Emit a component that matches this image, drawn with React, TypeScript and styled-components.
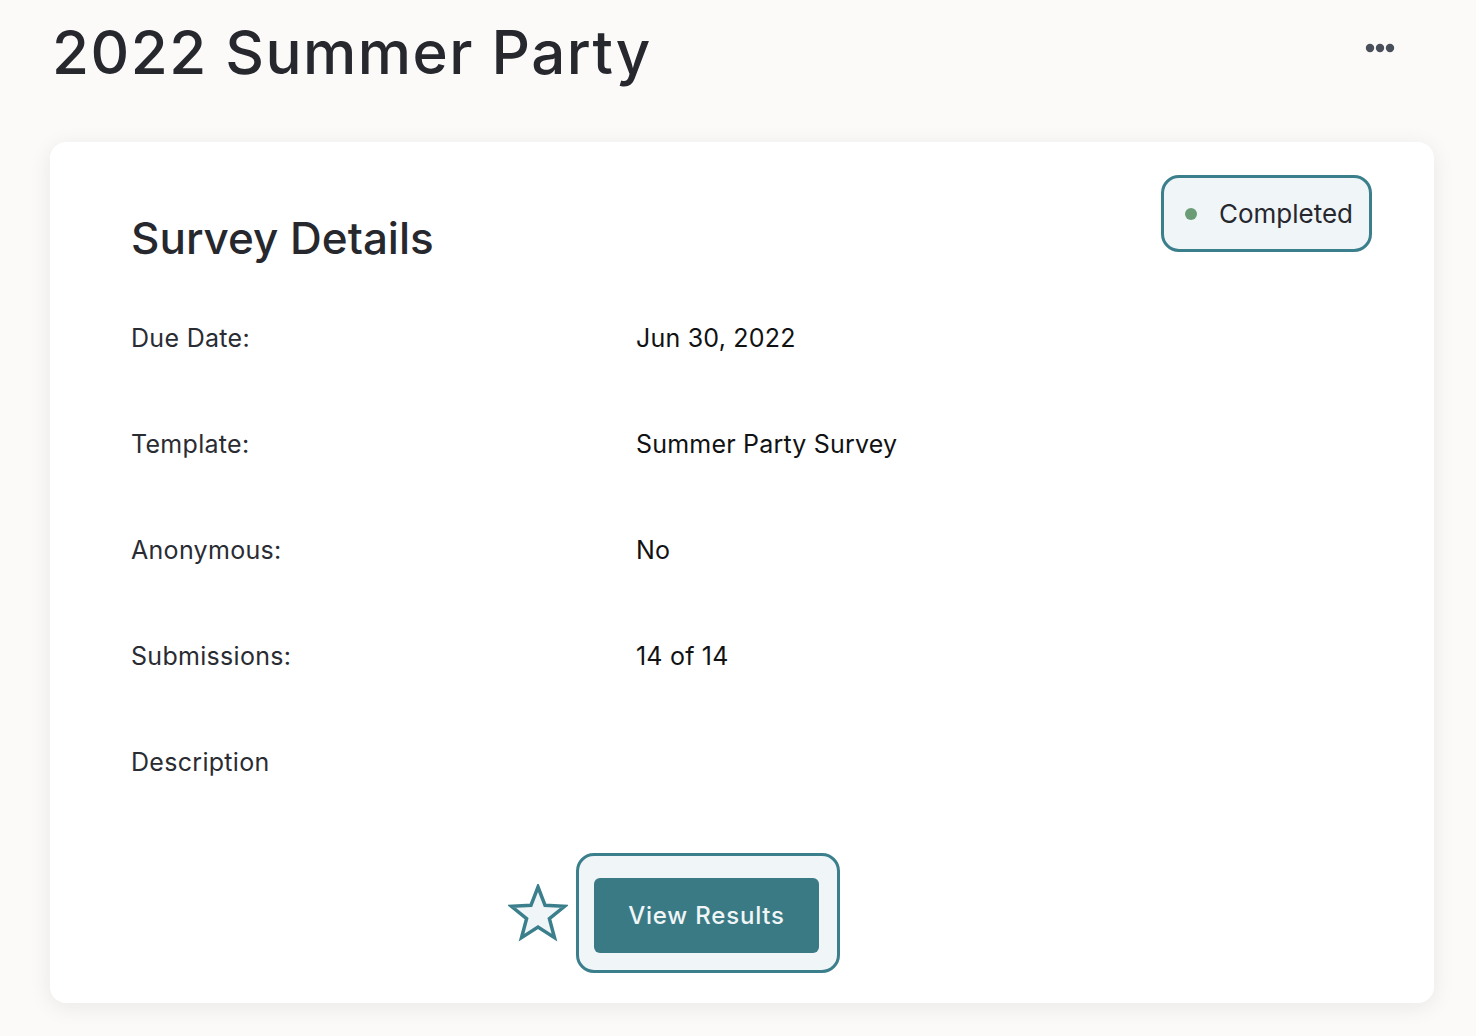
import React from "react";
import styled, { createGlobalStyle } from "styled-components";

const GlobalStyle = createGlobalStyle`
    html, body {
        margin: 0;
        padding: 0;
        background-color: #fbfaf9;
        font-family: Inter, 'Noto Sans', sans-serif;
        color: #26282e;
    }
`;

const Page = styled.div`
    width: 1476px;
    min-height: 1036px;
    box-sizing: border-box;
    padding: 16px 42px 0 50px;
`;

const Header = styled.header`
    display: flex;
    align-items: center;
    justify-content: space-between;
    height: 72px;
    margin-bottom: 54px;
`;

const Title = styled.h1`
    margin: 0 0 0 2px;
    font-size: 60px;
    line-height: 72px;
    font-weight: 500;
    letter-spacing: 1.5px;
    color: #26282e;
`;

const MoreButton = styled.button`
    background: transparent;
    border: none;
    padding: 0;
    margin-right: 39px;
    margin-top: -8px;
    display: flex;
    cursor: pointer;
`;

const Card = styled.section`
    background: #ffffff;
    border-radius: 16px;
    box-shadow: 0 4px 22px rgba(40, 30, 20, 0.08);
    padding: 34px 62px 30px 81px;
    display: flex;
    flex-direction: column;
`;

const CardHeader = styled.div`
    display: flex;
    justify-content: space-between;
    align-items: flex-start;
`;

const Heading = styled.h2`
    margin: 36px 0 0 0;
    font-size: 44px;
    line-height: 53px;
    font-weight: 500;
    color: #26282e;
`;

const Badge = styled.div`
    display: flex;
    align-items: center;
    gap: 22px;
    height: 71px;
    margin-top: -1px;
    padding: 0 16px 0 21px;
    border: 3px solid #3a7f8b;
    border-radius: 18px;
    background: #f0f5f8;
    font-size: 26px;
    color: #26282e;
`;

const Dot = styled.span<{ $color: string }>`
    width: 12px;
    height: 12px;
    border-radius: 50%;
    background: ${(p) => p.$color};
`;

const Details = styled.dl`
    margin: 20px 0 0 0;
    display: grid;
    grid-template-columns: 505px 1fr;
    grid-auto-rows: 106px;
    align-items: center;
`;

const Label = styled.dt`
    font-size: 25px;
    line-height: 30px;
    letter-spacing: 0.3px;
    color: #2a2c33;
`;

const Value = styled.dd`
    margin: 0;
    font-size: 25px;
    line-height: 30px;
    letter-spacing: 0.2px;
    color: #111214;
`;

const Actions = styled.div`
    display: flex;
    align-items: center;
    gap: 8px;
    margin-top: 38px;
    padding-left: 377px;
`;

const FocusRing = styled.div`
    border: 3px solid #3a7f8b;
    border-radius: 18px;
    background: #f0f5f8;
    padding: 22px 18px 17px 15px;
`;

const PrimaryButton = styled.button`
    width: 225px;
    height: 75px;
    border: none;
    border-radius: 6px;
    background: #3a7a84;
    color: #f0f5f8;
    font-family: Inter, 'Noto Sans', sans-serif;
    font-size: 24px;
    font-weight: 500;
    letter-spacing: 0.8px;
    cursor: pointer;
`;

const rows: [string, string][] = [
    ["Due Date:", "Jun 30, 2022"],
    ["Template:", "Summer Party Survey"],
    ["Anonymous:", "No"],
    ["Submissions:", "14 of 14"],
    ["Description", ""],
];

function starPoints(cx: number, cy: number, outer: number, inner: number) {
    const pts: string[] = [];
    for (let i = 0; i < 10; i++) {
        const r = i % 2 === 0 ? outer : inner;
        const a = -Math.PI / 2 + (i * Math.PI) / 5;
        pts.push(`${(cx + r * Math.cos(a)).toFixed(2)},${(cy + r * Math.sin(a)).toFixed(2)}`);
    }
    return pts.join(" ");
}

const Star = () => (
    <svg width="60" height="58" viewBox="0 0 60 58">
        <polygon
            points={starPoints(30, 31, 28, 12)}
            fill="#f0f5f8"
            stroke="#3a7f8b"
            strokeWidth="3.5"
            strokeLinejoin="miter"
        />
    </svg>
);

const Dots = () => (
    <svg width="30" height="10" viewBox="0 0 30 10">
        <circle cx="5" cy="5" r="4.2" fill="#4a4f5c" />
        <circle cx="15" cy="5" r="4.2" fill="#4a4f5c" />
        <circle cx="25" cy="5" r="4.2" fill="#4a4f5c" />
    </svg>
);

export default function App() {
    return (
        <>
            <GlobalStyle />
            <Page>
                <Header>
                    <Title>2022 Summer Party</Title>
                    <MoreButton aria-label="More options">
                        <Dots />
                    </MoreButton>
                </Header>
                <Card>
                    <CardHeader>
                        <Heading>Survey Details</Heading>
                        <Badge>
                            <Dot $color="#6a9d76" />
                            Completed
                        </Badge>
                    </CardHeader>
                    <Details>
                        {rows.map(([label, value]) => (
                            <React.Fragment key={label}>
                                <Label>{label}</Label>
                                <Value>{value}</Value>
                            </React.Fragment>
                        ))}
                    </Details>
                    <Actions>
                        <Star />
                        <FocusRing>
                            <PrimaryButton>View Results</PrimaryButton>
                        </FocusRing>
                    </Actions>
                </Card>
            </Page>
        </>
    );
}
